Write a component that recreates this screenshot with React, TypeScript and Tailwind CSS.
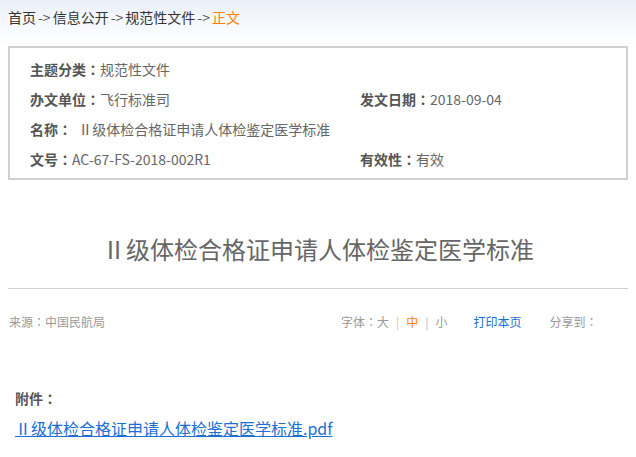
const fontStack = "font-['Noto_Sans_CJK_SC','Noto_Sans',sans-serif]";

// centred full-width colon, as in the reference
function Colon() {
  return <span className="font-['Noto_Sans_CJK_JP','Noto_Sans_CJK_SC',sans-serif]">：</span>;
}

function InfoItem({ label, value }: { label: string; value: string }) {
  return (
    <div className="flex items-center h-[30px] leading-[30px] text-[14px] whitespace-nowrap">
      <span className="font-bold text-[#555]">
        {label}
        <Colon />
      </span>
      <span className="text-[#666] whitespace-pre">{value}</span>
    </div>
  );
}

function Arrow() {
  return <span className="px-[2px] text-[#555]">-&gt;</span>;
}

export default function App() {
  return (
    <div className={`w-[636px] h-[457px] overflow-hidden bg-white ${fontStack}`}>
      {/* breadcrumb */}
      <div className="h-[46px] pt-[7px] px-2 bg-gradient-to-b from-[#eaf0f8] via-[#f6f8fc] to-white">
        <div className="text-[14px] leading-[20px] text-[#333] whitespace-nowrap">
          <span>首页</span>
          <Arrow />
          <span>信息公开</span>
          <Arrow />
          <span>规范性文件</span>
          <Arrow />
          <span className="text-[#ff8000]">正文</span>
        </div>
      </div>

      {/* meta box */}
      <div className="mx-2 w-[620px] h-[134px] border-2 border-[#d0d0d0] pt-[6px] pl-5">
        <div className="grid grid-cols-[330px_1fr]">
          <InfoItem label="主题分类" value="规范性文件" />
          <div />
          <InfoItem label="办文单位" value="飞行标准司" />
          <InfoItem label="发文日期" value="2018-09-04" />
          <div className="col-span-2">
            <InfoItem label="名称" value="  Ⅱ级体检合格证申请人体检鉴定医学标准" />
          </div>
          <InfoItem label="文号" value="AC-67-FS-2018-002R1" />
          <InfoItem label="有效性" value="有效" />
        </div>
      </div>

      {/* title */}
      <h1 className="pt-[55px] text-center text-[24px] leading-[28px] text-[#666] whitespace-nowrap">
        Ⅱ级体检合格证申请人体检鉴定医学标准
      </h1>
      <div className="mx-2 mt-[25px] border-t border-[#d0d0d0]" />

      {/* source / tools */}
      <div className="mt-[23px] pl-[9px] flex items-center text-[12px] leading-[20px] text-[#999] whitespace-nowrap">
        <span className="w-[332px]">
          来源<Colon />中国民航局
        </span>
        <span>
          字体<Colon />大
        </span>
        <span className="mx-[7px] text-[#f0b890]">|</span>
        <span className="text-[#ff8000]">中</span>
        <span className="mx-[7px] text-[#a8c0dc]">|</span>
        <span>小</span>
        <span className="ml-[26px] text-[#1a6fd6]">打印本页</span>
        <span className="ml-[28px]">
          分享到<Colon />
        </span>
      </div>

      {/* attachment */}
      <div className="mt-[56px] px-[15px]">
        <div className="text-[14px] leading-[20px] font-bold text-[#555]">
          附件<Colon />
        </div>
        <a href="#" className="block mt-[8px] text-[16px] leading-[24px] text-[#1a6fd6] underline whitespace-nowrap">
          Ⅱ级体检合格证申请人体检鉴定医学标准.pdf
        </a>
      </div>
    </div>
  );
}
